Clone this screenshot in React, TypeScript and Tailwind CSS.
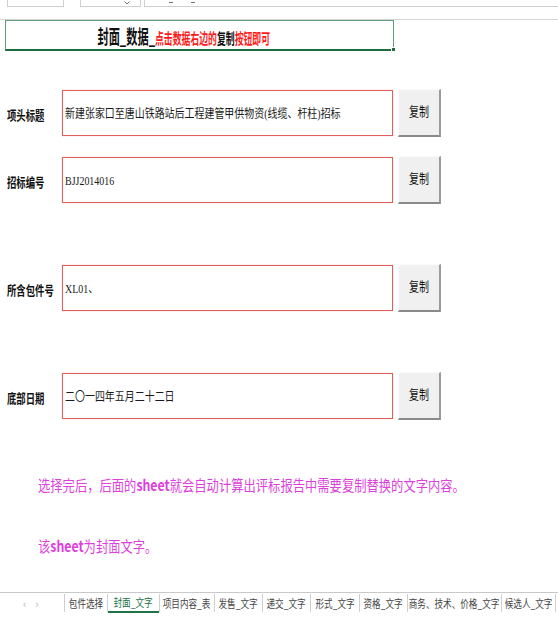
import React from "react";

const rows = [
  { label: "项头标题", value: "新建张家口至唐山铁路站后工程建管甲供物资(线缆、杆柱)招标", mt: "mt-[38px]" },
  { label: "招标编号", value: "BJJ2014016", mt: "mt-[19px]" },
  { label: "所含包件号", value: "XL01、", mt: "mt-[60px]" },
  { label: "底部日期", value: "二〇一四年五月二十二日", mt: "mt-[60px]" },
];

const tabs: { name: string; w: string; active?: boolean }[] = [
  { name: "包件选择", w: "w-[42px]" },
  { name: "封面_文字", w: "w-[51px]", active: true },
  { name: "项目内容_表", w: "w-[54px]" },
  { name: "发售_文字", w: "w-[47px]" },
  { name: "递交_文字", w: "w-[47px]" },
  { name: "形式_文字", w: "w-[48px]" },
  { name: "资格_文字", w: "w-[47px]" },
  { name: "商务、技术、价格_文字", w: "w-[93px]" },
  { name: "候选人_文字", w: "w-[53px]" },
];

function Sep() {
  return <div className="w-px h-[18px] bg-[#cfcfcf] self-center shrink-0" />;
}

export default function App() {
  return (
    <div className="w-[558px] h-[626px] bg-white flex flex-col overflow-hidden font-['Noto_Sans_CJK_SC',sans-serif]">
      {/* top strip */}
      <div className="h-[7px] flex shrink-0">
        <div className="ml-[7px] w-[57px] border-x border-b border-[#cfcfcf]" />
        <div className="ml-[16px] w-[61px] border-x border-b border-[#cfcfcf] relative">
          <svg className="absolute left-[43px] top-[1px]" width="6" height="4" viewBox="0 0 6 4">
            <path d="M0.5 0.5 L3 3 L5.5 0.5" stroke="#777" fill="none" strokeWidth="1" />
          </svg>
        </div>
        <div className="ml-[3px] flex-1 border-l border-b border-[#cfcfcf] relative">
          <div className="absolute left-[24px] top-[2px] w-[4px] h-px bg-[#777]" />
          <div className="absolute left-[46px] top-[2px] w-[4px] h-px bg-[#777]" />
        </div>
      </div>
      <div className="mt-[12px] border-t border-[#d6d6d6] shrink-0" />

      {/* title box */}
      <div className="ml-[5px] w-[389px] h-[31px] border border-[#5f9c78] border-b-2 border-b-[#1f6b40] relative flex items-center shrink-0">
        <span className="inline-block origin-left scale-x-[0.59] pl-[155px] whitespace-nowrap font-bold leading-none">
          <span className="text-[19px] text-[#111]">封面_数据_</span>
          <span className="text-[15px] text-[#ff1a1a]">点击数据右边的</span>
          <span className="text-[15px] text-[#111]">复制</span>
          <span className="text-[15px] text-[#ff1a1a]">按钮即可</span>
        </span>
        <div className="absolute -right-[3px] -bottom-[3px] w-[5px] h-[5px] bg-[#1f6b40] border border-white" />
      </div>

      {/* rows */}
      {rows.map((r) => (
        <div key={r.label} className={`${r.mt} h-[48px] flex items-center shrink-0`}>
          <div className="w-[62px] pl-[7px] pt-[3px] text-[13px] font-bold text-[#111] whitespace-nowrap">
            <span className="inline-block origin-left scale-x-[0.72]">{r.label}</span>
          </div>
          <div className="w-[331px] h-[46px] border border-[#e35d5d] shadow-[0_0_1px_#f3b0b0] flex items-center pl-[2px] overflow-hidden">
            <span className="inline-block origin-left scale-x-[0.83] whitespace-nowrap text-[12px] text-[#1a1a1a] pt-[2px] font-['Liberation_Serif','Noto_Sans_CJK_SC',serif]">
              {r.value}
            </span>
          </div>
          <div className="ml-[5px] w-[43px] h-[48px] bg-[#f0f0f0] border-t border-l border-t-[#fbfbfb] border-l-[#fbfbfb] border-r-2 border-b-2 border-r-[#9a9a9a] border-b-[#8a8a8a] flex items-center justify-center">
            <span className="inline-block scale-x-[0.77] text-[13px] text-[#111] pb-[3px]">复制</span>
          </div>
        </div>
      ))}

      {/* pink notes */}
      <div className="mt-[55px] h-[20px] flex items-center pl-[38px] shrink-0">
        <span className="inline-block origin-left scale-x-[0.82] whitespace-nowrap text-[15px] text-[#dc3fdc]">
          选择完后，后面的<span className="font-bold">sheet</span>就会自动计算出评标报告中需要复制替换的文字内容。
        </span>
      </div>
      <div className="mt-[41px] h-[20px] flex items-center pl-[38px] shrink-0">
        <span className="inline-block origin-left scale-x-[0.82] whitespace-nowrap text-[15px] text-[#dc3fdc]">
          该<span className="font-bold">sheet</span>为封面文字。
        </span>
      </div>

      {/* sheet tabs */}
      <div className="mt-auto h-[34px] border-t border-[#c9c9c9] bg-white shrink-0">
        <div className="h-[20px] flex items-stretch">
          <div className="w-[64px] flex items-center shrink-0 text-[11px] text-[#b0b0b0]">
            <span className="ml-[23px]">‹</span>
            <span className="ml-[9px]">›</span>
          </div>
          <Sep />
          {tabs.map((t) => (
            <React.Fragment key={t.name}>
              <div
                className={`${t.w} shrink-0 flex items-center justify-center whitespace-nowrap text-[11px] ${
                  t.active ? "bg-white border-b-2 border-[#217346] text-[#217346]" : "text-[#444]"
                }`}
              >
                <span className="inline-block scale-x-[0.78]">{t.name}</span>
              </div>
              <Sep />
            </React.Fragment>
          ))}
        </div>
      </div>
    </div>
  );
}
